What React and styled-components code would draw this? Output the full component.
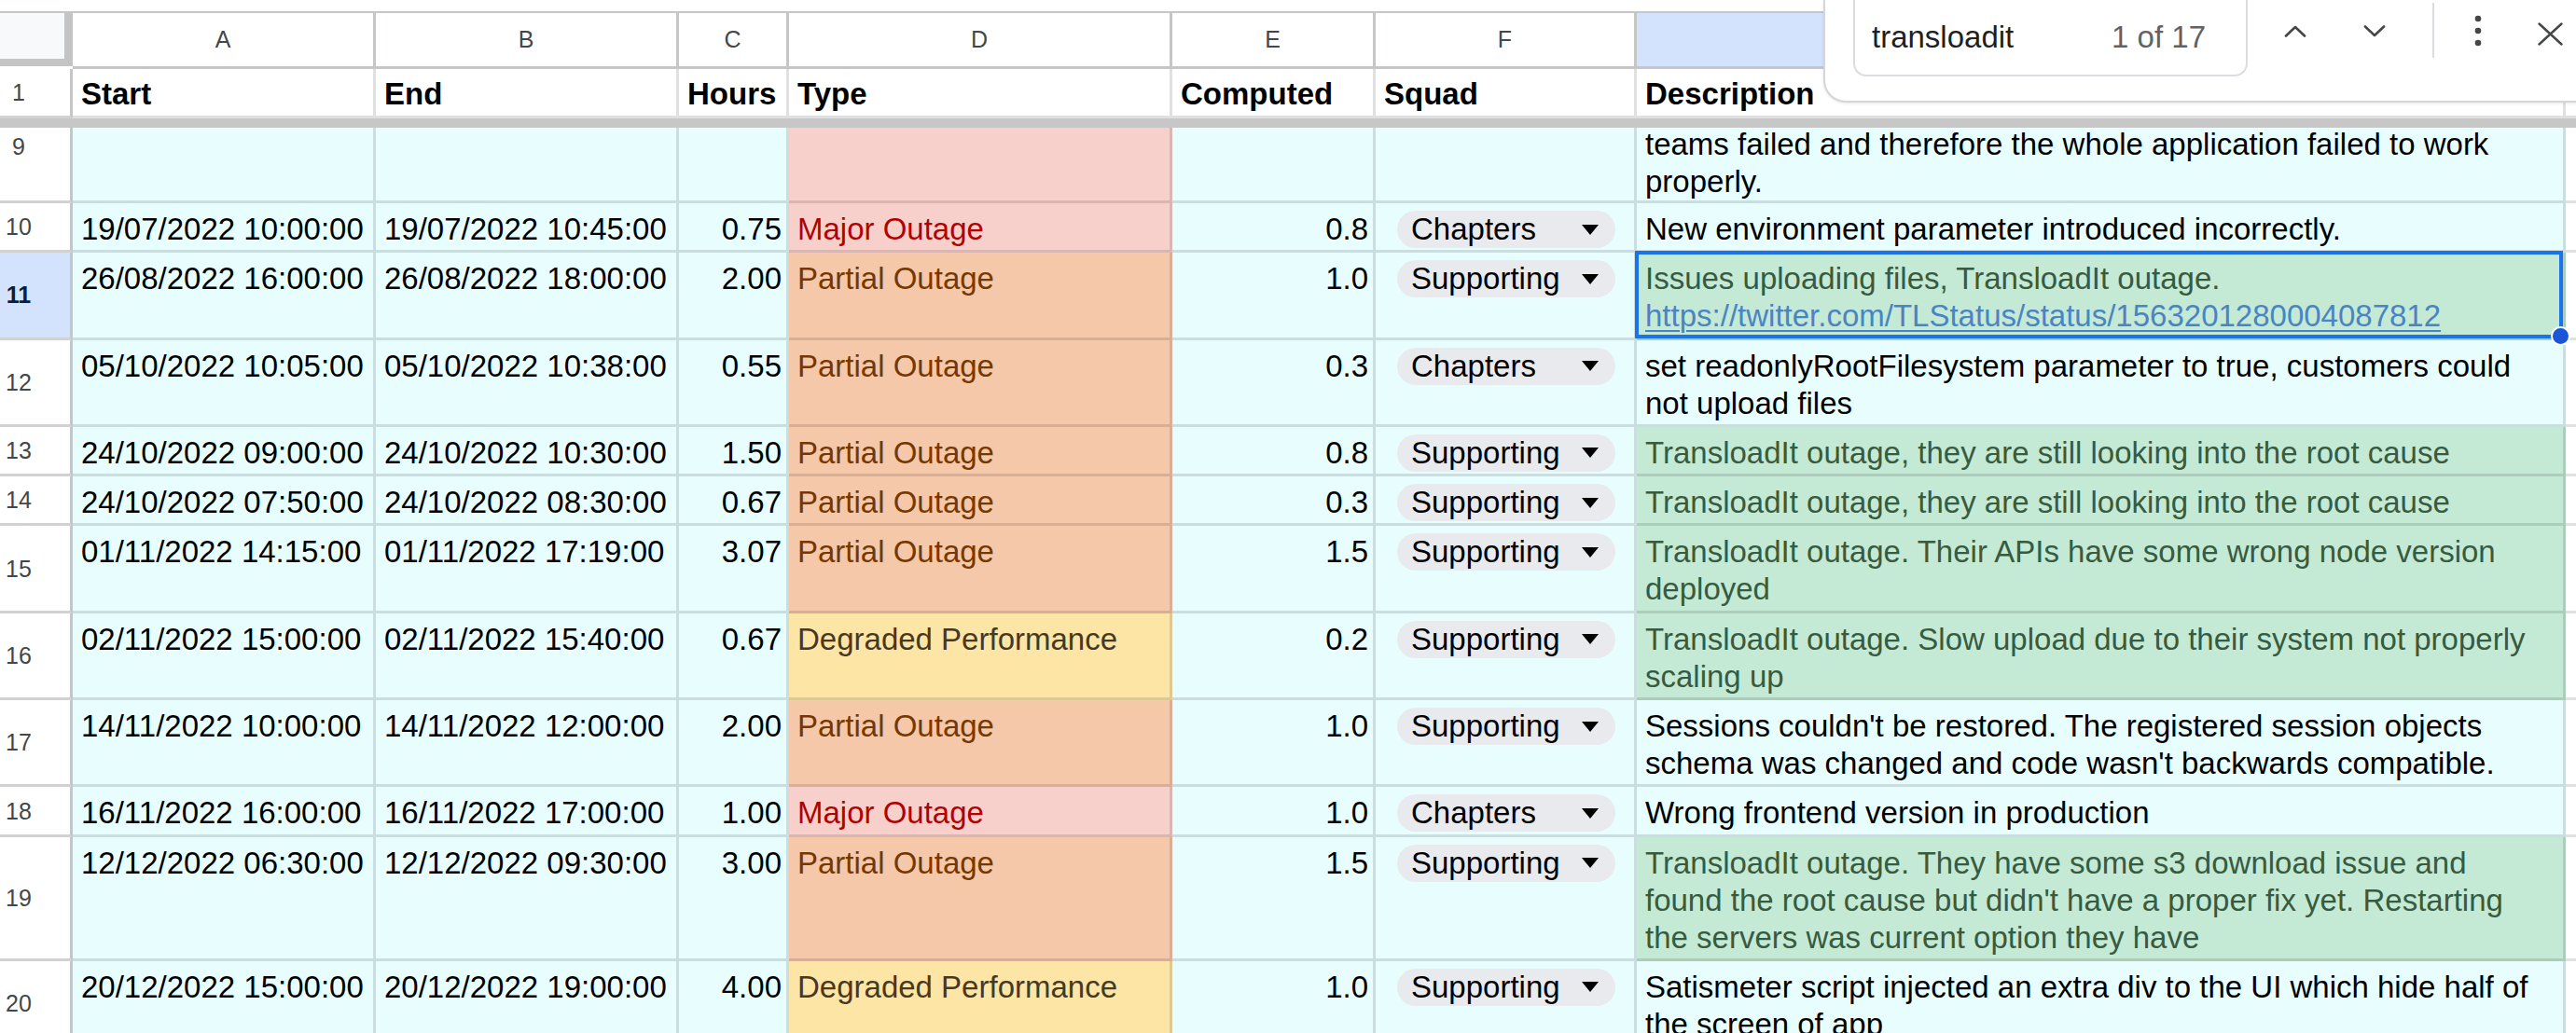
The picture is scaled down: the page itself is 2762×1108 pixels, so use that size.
import React from 'react';
import styled, { createGlobalStyle, css } from 'styled-components';

const GlobalStyle = createGlobalStyle`
  html, body { margin: 0; padding: 0; background: #fff; overflow: hidden; }
  body { font-family: "Liberation Sans", Arial, sans-serif; }
  #root { height: 1108px; }
`;

const COLS = '78px 325px 325px 118px 411px 218px 280px 996px 1fr';
const GRID_LINE = 'rgba(0, 0, 0, 0.12)';
const HEADER_LINE = '#c4c7c5';

const Sheet = styled.div`
  position: relative;
  height: 1108px;
  overflow: hidden;
  background: #fff;
  font-family: "Liberation Sans", Arial, sans-serif;
`;

const TopGap = styled.div`
  height: 12px;
  background: #fff;
`;

const ColumnHeaderRow = styled.div`
  display: grid;
  grid-template-columns: ${COLS};
  height: 62px;
  box-sizing: border-box;
  border-top: 2px solid ${HEADER_LINE};
`;

const Corner = styled.div`
  box-sizing: border-box;
  height: 57px;
  align-self: start;
  background: #f8f9fa;
  border-right: 9px solid #c4c4c4;
  border-bottom: 8px solid #c4c4c4;
`;

const ColLetter = styled.div`
  display: flex;
  align-items: center;
  justify-content: center;
  box-sizing: border-box;
  font-size: 25px;
  color: #444746;
  background: ${(p) => (p.$active ? '#d3e3fd' : '#fff')};
  border-right: ${(p) => (p.$last ? 'none' : `3px solid ${HEADER_LINE}`)};
  border-bottom: 3px solid ${HEADER_LINE};
`;

const Row = styled.div`
  display: grid;
  grid-template-columns: ${COLS};
  height: ${(p) => p.$h}px;
  flex: none;
`;

const FreezeBar = styled.div`
  height: 10px;
  background: #c7c7c7;
`;

const Body = styled.div`
  display: flex;
  flex-direction: column;
`;

const RowNum = styled.div`
  box-sizing: border-box;
  display: flex;
  align-items: ${(p) => (p.$top ? 'flex-start' : 'center')};
  background: ${(p) => (p.$active ? '#d3e3fd' : '#fff')};
  color: ${(p) => (p.$active ? '#041e49' : '#444746')};
  font-weight: ${(p) => (p.$active ? 700 : 400)};
  font-size: 25px;
  line-height: 40px;
  border-right: 3px solid ${HEADER_LINE};
  border-bottom: 3px solid #d2d2d2;
  overflow: hidden;
`;

const NumLabel = styled.span`
  width: 40px;
  text-align: center;
`;

const Cell = styled.div`
  position: relative;
  box-sizing: border-box;
  min-width: 0;
  padding: ${(p) => p.$pt ?? 8}px ${(p) => (p.$align === 'right' ? 5 : 9)}px 0 9px;
  background: ${(p) => p.$bg || '#e8fdfe'};
  color: ${(p) => p.$fg || '#000'};
  text-align: ${(p) => p.$align || 'left'};
  font-size: 33px;
  font-weight: ${(p) => (p.$bold ? 700 : 400)};
  line-height: 40px;
  white-space: nowrap;
  overflow: ${(p) => (p.$selected ? 'visible' : 'hidden')};
  z-index: ${(p) => (p.$selected ? 3 : 'auto')};
  border-right: ${(p) => (p.$last ? 'none' : `3px solid ${GRID_LINE}`)};
  border-bottom: 3px solid ${GRID_LINE};
  ${(p) =>
    p.$clip &&
    css`
      display: flex;
      flex-direction: column;
      justify-content: flex-end;
      padding-top: 0;
    `}
`;

const Line = styled.div`
  display: block;
`;

const Link = styled.a`
  color: #4a84c4;
  text-decoration: underline;
  text-decoration-thickness: 2px;
  text-underline-offset: 4px;
`;

const SquadCell = styled(Cell)`
  padding-left: 23px;
  padding-right: 20px;
`;

const Chip = styled.div`
  display: flex;
  align-items: center;
  justify-content: space-between;
  height: 40px;
  padding: 0 18px 0 15px;
  border-radius: 20px;
  background: #e8eaed;
  color: #000;
`;

const ChipArrow = styled.span`
  width: 0;
  height: 0;
  border-left: 9.5px solid transparent;
  border-right: 9.5px solid transparent;
  border-top: 11px solid #000;
`;

const SelectionFrame = styled.div`
  position: absolute;
  top: -2px;
  left: -2px;
  right: 0;
  bottom: -1px;
  border: 4px solid #1a73e8;
  pointer-events: none;
`;

const FillHandle = styled.div`
  position: absolute;
  right: -12px;
  bottom: -12px;
  width: 17px;
  height: 17px;
  border-radius: 50%;
  background: #1a56d6;
  border: 2.5px solid #fff;
`;

/* Find bar overlay */
const FindPanel = styled.div`
  position: absolute;
  top: 0;
  left: 1955px;
  right: -40px;
  height: 110px;
  box-sizing: border-box;
  background: #fff;
  border: 2px solid #d6d6d6;
  border-top: none;
  border-radius: 0 0 0 24px;
  box-shadow: 0 1px 3px rgba(60, 64, 67, 0.12);
  display: flex;
  align-items: flex-start;
  padding-left: 30px;
  z-index: 10;
`;

const FindInput = styled.div`
  box-sizing: border-box;
  width: 423px;
  height: 82px;
  display: flex;
  align-items: center;
  justify-content: space-between;
  padding: 0 43px 0 18px;
  border: 2px solid #dadce0;
  border-top: none;
  border-radius: 0 0 14px 14px;
  font-size: 33px;
`;

const Query = styled.span`
  color: #1f1f1f;
`;

const MatchCount = styled.span`
  color: #5f6368;
`;

const IconButton = styled.div`
  flex: none;
  width: ${(p) => p.$w}px;
  height: ${(p) => p.$h || 66}px;
  margin-left: ${(p) => p.$ml || 0}px;
  display: flex;
  align-items: center;
  justify-content: center;
  color: #444746;
`;

const Divider = styled.div`
  flex: none;
  width: 2px;
  height: 59px;
  margin: 3px 0 0 20px;
  background: #dadce0;
`;

const ChevronUp = () => (
  <svg width="24" height="13" viewBox="0 0 24 13" fill="none">
    <polyline points="2,11.5 12,2 22,11.5" stroke="currentColor" strokeWidth="2.6" strokeLinecap="round" strokeLinejoin="round" />
  </svg>
);

const ChevronDown = () => (
  <svg width="24" height="13" viewBox="0 0 24 13" fill="none">
    <polyline points="2,1.5 12,11 22,1.5" stroke="currentColor" strokeWidth="2.6" strokeLinecap="round" strokeLinejoin="round" />
  </svg>
);

const MoreDots = () => (
  <svg width="8" height="34" viewBox="0 0 8 34">
    <circle cx="4" cy="4" r="3.3" fill="currentColor" />
    <circle cx="4" cy="17" r="3.3" fill="currentColor" />
    <circle cx="4" cy="30" r="3.3" fill="currentColor" />
  </svg>
);

const CloseX = () => (
  <svg width="27" height="25" viewBox="0 0 27 25" fill="none">
    <line x1="1.5" y1="1.5" x2="25.5" y2="23.5" stroke="currentColor" strokeWidth="2.4" strokeLinecap="round" />
    <line x1="25.5" y1="1.5" x2="1.5" y2="23.5" stroke="currentColor" strokeWidth="2.4" strokeLinecap="round" />
  </svg>
);

const TYPES = {
  major: { label: 'Major Outage', bg: '#f8d0cb', fg: '#b10202' },
  partial: { label: 'Partial Outage', bg: '#f6c8aa', fg: '#753800' },
  degraded: { label: 'Degraded Performance', bg: '#fde5a6', fg: '#473821' },
};

const FOUND_BG = '#c4ead5';
const FOUND_FG = '#375b40';

const rows = [
  {
    n: 10, lines: 1, start: '19/07/2022 10:00:00', end: '19/07/2022 10:45:00', hours: '0.75',
    type: 'major', computed: '0.8', squad: 'Chapters',
    desc: ['New environment parameter introduced incorrectly.'],
  },
  {
    n: 11, lines: 2, start: '26/08/2022 16:00:00', end: '26/08/2022 18:00:00', hours: '2.00',
    type: 'partial', computed: '1.0', squad: 'Supporting', found: true, selected: true,
    desc: ['Issues uploading files, TransloadIt outage.'],
    link: 'https://twitter.com/TLStatus/status/1563201280004087812',
  },
  {
    n: 12, lines: 2, start: '05/10/2022 10:05:00', end: '05/10/2022 10:38:00', hours: '0.55',
    type: 'partial', computed: '0.3', squad: 'Chapters',
    desc: ['set readonlyRootFilesystem parameter to true, customers could', 'not upload files'],
  },
  {
    n: 13, lines: 1, start: '24/10/2022 09:00:00', end: '24/10/2022 10:30:00', hours: '1.50',
    type: 'partial', computed: '0.8', squad: 'Supporting', found: true,
    desc: ['TransloadIt outage, they are still looking into the root cause'],
  },
  {
    n: 14, lines: 1, start: '24/10/2022 07:50:00', end: '24/10/2022 08:30:00', hours: '0.67',
    type: 'partial', computed: '0.3', squad: 'Supporting', found: true,
    desc: ['TransloadIt outage, they are still looking into the root cause'],
  },
  {
    n: 15, lines: 2, start: '01/11/2022 14:15:00', end: '01/11/2022 17:19:00', hours: '3.07',
    type: 'partial', computed: '1.5', squad: 'Supporting', found: true,
    desc: ['TransloadIt outage. Their APIs have some wrong node version', 'deployed'],
  },
  {
    n: 16, lines: 2, start: '02/11/2022 15:00:00', end: '02/11/2022 15:40:00', hours: '0.67',
    type: 'degraded', computed: '0.2', squad: 'Supporting', found: true,
    desc: ['TransloadIt outage. Slow upload due to their system not properly', 'scaling up'],
  },
  {
    n: 17, lines: 2, start: '14/11/2022 10:00:00', end: '14/11/2022 12:00:00', hours: '2.00',
    type: 'partial', computed: '1.0', squad: 'Supporting',
    desc: ["Sessions couldn't be restored. The registered session objects", "schema was changed and code wasn't backwards compatible."],
  },
  {
    n: 18, lines: 1, start: '16/11/2022 16:00:00', end: '16/11/2022 17:00:00', hours: '1.00',
    type: 'major', computed: '1.0', squad: 'Chapters',
    desc: ['Wrong frontend version in production'],
  },
  {
    n: 19, lines: 3, start: '12/12/2022 06:30:00', end: '12/12/2022 09:30:00', hours: '3.00',
    type: 'partial', computed: '1.5', squad: 'Supporting', found: true,
    desc: [
      'TransloadIt outage. They have some s3 download issue and',
      "found the root cause but didn't have a proper fix yet. Restarting",
      'the servers was current option they have',
    ],
  },
  {
    n: 20, lines: 2, start: '20/12/2022 15:00:00', end: '20/12/2022 19:00:00', hours: '4.00',
    type: 'degraded', computed: '1.0', squad: 'Supporting',
    desc: ['Satismeter script injected an extra div to the UI which hide half of', 'the screen of app'],
  },
];

const rowHeight = (lines) => 13.3 + 40 * lines;

const letters = ['A', 'B', 'C', 'D', 'E', 'F', 'G'];
const headers = ['Start', 'End', 'Hours', 'Type', 'Computed', 'Squad', 'Description'];

function DataRow({ r }) {
  const t = TYPES[r.type];
  return (
    <Row $h={rowHeight(r.lines)}>
      <RowNum $active={r.selected}>
        <NumLabel>{r.n}</NumLabel>
      </RowNum>
      <Cell>{r.start}</Cell>
      <Cell>{r.end}</Cell>
      <Cell $align="right">{r.hours}</Cell>
      <Cell $bg={t.bg} $fg={t.fg}>{t.label}</Cell>
      <Cell $align="right">{r.computed}</Cell>
      <SquadCell>
        <Chip>
          <span>{r.squad}</span>
          <ChipArrow />
        </Chip>
      </SquadCell>
      <Cell
        $bg={r.found ? FOUND_BG : undefined}
        $fg={r.found ? FOUND_FG : undefined}
        $selected={r.selected}
      >
        {r.desc.map((l, i) => (
          <Line key={i}>{l}</Line>
        ))}
        {r.link && (
          <Line>
            <Link href="#">{r.link}</Link>
          </Line>
        )}
        {r.selected && (
          <SelectionFrame>
            <FillHandle />
          </SelectionFrame>
        )}
      </Cell>
      <Cell $bg="#fff" $last />
    </Row>
  );
}

export default function App() {
  return (
    <>
      <GlobalStyle />
      <Sheet>
        <TopGap />
        <ColumnHeaderRow>
          <Corner />
          {letters.map((l) => (
            <ColLetter key={l} $active={l === 'G'}>{l}</ColLetter>
          ))}
          <ColLetter $last />
        </ColumnHeaderRow>

        <Row $h={53}>
          <RowNum>
            <NumLabel>1</NumLabel>
          </RowNum>
          {headers.map((h) => (
            <Cell key={h} $bg="#fff" $bold $pt={7}>{h}</Cell>
          ))}
          <Cell $bg="#fff" $last />
        </Row>
        <FreezeBar />

        <Body>
          <Row $h={81}>
            <RowNum $top>
              <NumLabel>9</NumLabel>
            </RowNum>
            <Cell $clip />
            <Cell $clip />
            <Cell $clip />
            <Cell $clip $bg={TYPES.major.bg} />
            <Cell $clip />
            <Cell $clip />
            <Cell $clip>
              <Line>teams failed and therefore the whole application failed to work</Line>
              <Line>properly.</Line>
            </Cell>
            <Cell $clip $bg="#fff" $last />
          </Row>
          {rows.map((r) => (
            <DataRow key={r.n} r={r} />
          ))}
        </Body>

        <FindPanel>
          <FindInput>
            <Query>transloadit</Query>
            <MatchCount>1 of 17</MatchCount>
          </FindInput>
          <IconButton $w={85} $ml={8}>
            <ChevronUp />
          </IconButton>
          <IconButton $w={85}>
            <ChevronDown />
          </IconButton>
          <Divider />
          <IconButton $w={94}>
            <MoreDots />
          </IconButton>
          <IconButton $w={61} $h={72}>
            <CloseX />
          </IconButton>
        </FindPanel>
      </Sheet>
    </>
  );
}
